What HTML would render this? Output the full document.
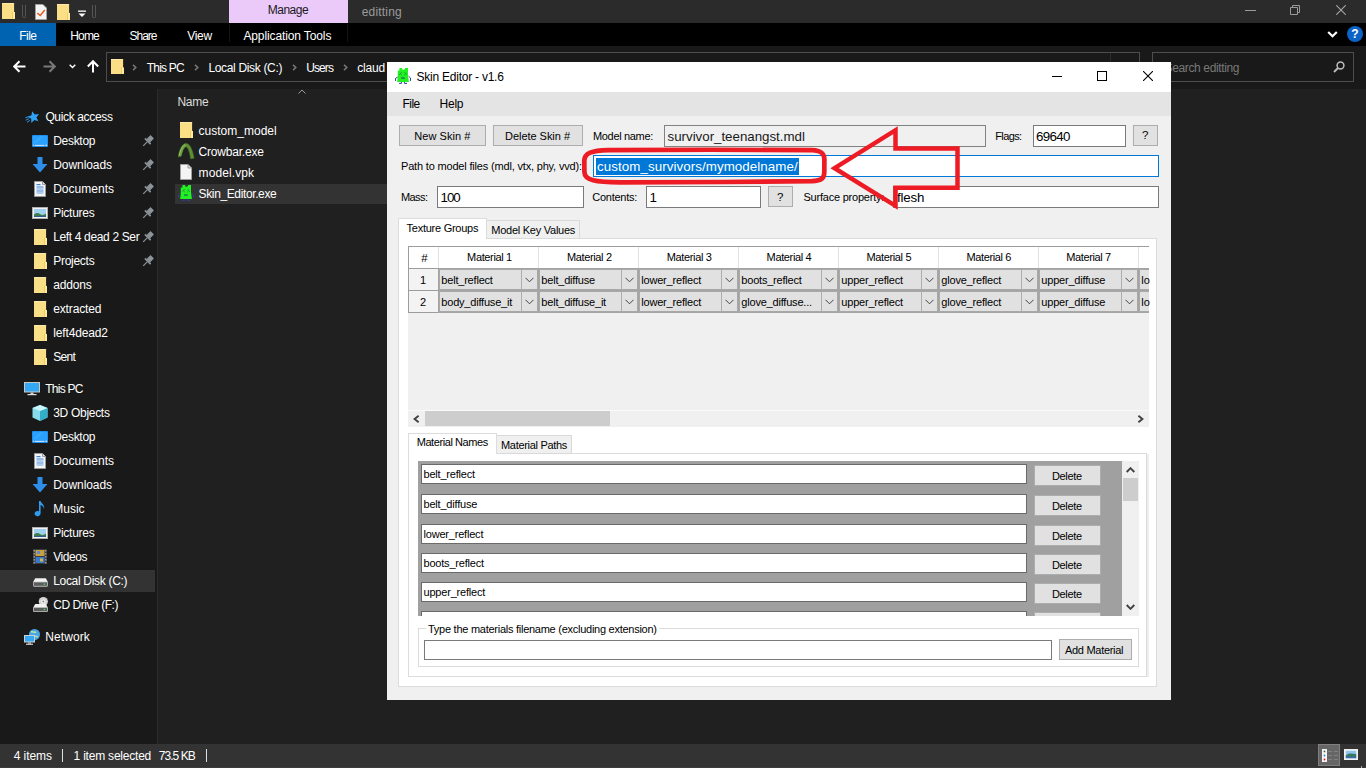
<!DOCTYPE html>
<html><head><meta charset="utf-8">
<style>
*{box-sizing:border-box;margin:0;padding:0}
html,body{width:1366px;height:768px;overflow:hidden;background:#202020}
body{position:relative;font-family:"Liberation Sans",sans-serif;font-size:12px;color:#fff}
.a{position:absolute}
.t{position:absolute;white-space:nowrap;line-height:16px;height:16px}
.tb{position:absolute;background:#fff;border:1px solid #7a7a7a}
.btn{position:absolute;background:#e1e1e1;border:1px solid #adadad}
.cb{position:absolute;background:#e1e1e1;border:1px solid #a8a8a8;height:21px;width:99px}
.cb i{position:absolute;right:15px;top:0;width:1px;height:19px;background:#adadad}
.cb svg{position:absolute;right:3px;top:7px}
</style></head><body>
<!-- ===== EXPLORER ===== -->
<div class="a" style="left:0;top:0;width:1366px;height:23px;background:#2b2b2b"></div>
<div class="a" style="left:229px;top:0;width:119px;height:23px;background:#ebc9f9"></div>
<div class="a" style="left:0;top:23px;width:1366px;height:23px;background:#000"></div>
<div class="a" style="left:0;top:23px;width:56px;height:23px;background:#0063b1"></div>
<div class="a" style="left:229px;top:24px;width:1px;height:18px;background:#151515"></div>
<div class="a" style="left:347px;top:24px;width:1px;height:18px;background:#151515"></div>
<div class="a" style="left:0;top:46px;width:1366px;height:43px;background:#191919"></div>
<div class="a" style="left:106px;top:52px;width:1034px;height:30px;border:1px solid #4d4d4d"></div>
<div class="a" style="left:1110px;top:53px;width:1px;height:28px;background:#2c2c2c"></div>
<div class="a" style="left:1152px;top:52px;width:202px;height:30px;border:1px solid #4d4d4d"></div>
<div class="a" style="left:0;top:89px;width:157px;height:655px;background:#191919"></div>
<div class="a" style="left:157px;top:89px;width:1px;height:655px;background:#2b2b2b"></div>
<div class="a" style="left:0;top:570px;width:155px;height:22px;background:#333"></div>
<div class="a" style="left:175px;top:184px;width:212px;height:20px;background:#333"></div>
<div class="a" style="left:0;top:744px;width:1366px;height:24px;background:#333"></div>
<div class="a" style="left:62px;top:749px;width:1px;height:13px;background:#e0e0e0"></div>
<div class="a" style="left:206px;top:749px;width:1px;height:13px;background:#e0e0e0"></div>
<div class="a" style="left:1318px;top:744px;width:22px;height:22px;background:#666;border:1px solid #808080"></div>
<div class="a" style="left:0;top:767px;width:1366px;height:1px;background:#3c3c3c"></div>
<svg class="a" style="left:2px;top:3px" width="13" height="16" viewBox="0 0 13 16"><path d="M0 0h11.6 l0.5 0.6V16H0z" fill="#fbdf86"/><rect x="0" y="0" width="11.6" height="1" fill="#fdeaa8"/><rect x="10.4" y="8.96" width="2.6" height="7.04" fill="#fde9a0"/><rect x="10.1" y="8.96" width="0.7" height="7.04" fill="#e6bd55"/></svg>
<div class="a" style="left:22px;top:5px;width:4px;height:13px;border:1px solid #555;border-top:none;border-radius:0 0 2px 2px"></div>
<svg class="a" style="left:35px;top:4px" width="12" height="16" viewBox="0 0 12 16"><path d="M0.5 0.5h7.5l3.5 3.5v11.5h-11z" fill="#f4f4f4" stroke="#a0a0a0"/><path d="M2.3 9.2l2.9 2.3 4.6-5.6" stroke="#f05a1e" stroke-width="1.5" fill="none"/></svg>
<svg class="a" style="left:57px;top:4px" width="13" height="16" viewBox="0 0 13 16"><path d="M0 0h11.6 l0.5 0.6V16H0z" fill="#fbdf86"/><rect x="0" y="0" width="11.6" height="1" fill="#fdeaa8"/><rect x="10.4" y="8.96" width="2.6" height="7.04" fill="#fde9a0"/><rect x="10.1" y="8.96" width="0.7" height="7.04" fill="#e6bd55"/></svg>
<svg class="a" style="left:77.7px;top:9.5px" width="8" height="8" viewBox="0 0 8 8"><rect x="0" y="0.5" width="8" height="1.3" fill="#fff"/><path d="M0.5 3.5h7L4 7z" fill="#fff"/></svg>
<div class="a" style="left:92px;top:5px;width:4px;height:13px;border:1px solid #555;border-top:none;border-radius:0 0 2px 2px"></div>
<svg class="a" style="left:1245px;top:10px" width="11" height="1" viewBox="0 0 11 1"><rect width="11" height="1" fill="#9a9a9a"/></svg>
<svg class="a" style="left:1290px;top:5px" width="10" height="10" viewBox="0 0 10 10"><path d="M0.5 2.5h7v7h-7zM2.5 2.5v-2h7v7h-2" fill="none" stroke="#9a9a9a"/></svg>
<svg class="a" style="left:1336px;top:5px" width="10" height="10" viewBox="0 0 10 10"><path d="M0.3 0.3l9.4 9.4M9.7 0.3l-9.4 9.4" stroke="#a8a8a8" stroke-width="1.1"/></svg>
<svg class="a" style="left:1327px;top:31px" width="11" height="7" viewBox="0 0 11 7"><path d="M1.2 1l4.3 4.2L9.8 1" stroke="#fff" stroke-width="2.2" fill="none"/></svg>
<div class="a" style="left:1347px;top:26px;width:16px;height:16px;border-radius:8px;background:#0d62c6;color:#fff;font-weight:bold;font-size:12px;line-height:16px;text-align:center">?</div>
<svg class="a" style="left:13px;top:60px" width="13" height="13" viewBox="0 0 13 13"><path d="M12.5 6.5H1.5M6.5 1.2L1.2 6.5l5.3 5.3" stroke="#fff" stroke-width="2" fill="none"/></svg>
<svg class="a" style="left:43px;top:60px" width="13" height="13" viewBox="0 0 13 13"><path d="M0.5 6.5H11.5M6.5 1.2l5.3 5.3-5.3 5.3" stroke="#7a7a7a" stroke-width="2" fill="none"/></svg>
<svg class="a" style="left:69px;top:64px" width="7" height="5" viewBox="0 0 7 5"><path d="M0.7 0.7l2.8 2.8 2.8-2.8" stroke="#fff" stroke-width="1.4" fill="none"/></svg>
<svg class="a" style="left:87px;top:60px" width="12" height="13" viewBox="0 0 12 13"><path d="M6 12.5V1.5M0.8 6.5L6 1.2l5.2 5.3" stroke="#fff" stroke-width="2" fill="none"/></svg>
<svg class="a" style="left:111px;top:59px" width="13" height="15" viewBox="0 0 13 15"><path d="M0 0h11.6 l0.5 0.6V15H0z" fill="#fbdf86"/><rect x="0" y="0" width="11.6" height="1" fill="#fdeaa8"/><rect x="10.4" y="8.4" width="2.6" height="6.6" fill="#fde9a0"/><rect x="10.1" y="8.4" width="0.7" height="6.6" fill="#e6bd55"/></svg>
<svg class="a" style="left:131.9px;top:64px" width="5" height="7" viewBox="0 0 5 7"><path d="M1 0.8L3.8 3.5 1 6.2" stroke="#757575" stroke-width="1.6" fill="none"/></svg>
<svg class="a" style="left:194.3px;top:64px" width="5" height="7" viewBox="0 0 5 7"><path d="M1 0.8L3.8 3.5 1 6.2" stroke="#757575" stroke-width="1.6" fill="none"/></svg>
<svg class="a" style="left:292.0px;top:64px" width="5" height="7" viewBox="0 0 5 7"><path d="M1 0.8L3.8 3.5 1 6.2" stroke="#757575" stroke-width="1.6" fill="none"/></svg>
<svg class="a" style="left:343.0px;top:64px" width="5" height="7" viewBox="0 0 5 7"><path d="M1 0.8L3.8 3.5 1 6.2" stroke="#757575" stroke-width="1.6" fill="none"/></svg>
<svg class="a" style="left:1333px;top:61px" width="12" height="12" viewBox="0 0 12 12"><circle cx="7.5" cy="4.5" r="3.4" stroke="#bdbdbd" stroke-width="1.5" fill="none"/><path d="M5 7L1 11" stroke="#bdbdbd" stroke-width="1.8"/></svg>
<svg class="a" style="left:297.5px;top:88.5px" width="8" height="5" viewBox="0 0 8 5"><path d="M0.5 4.5L4 1l3.5 3.5" stroke="#9a9a9a" stroke-width="1" fill="none"/></svg>
<svg class="a" style="left:25px;top:111px" width="15" height="12.2" viewBox="0 0 16 13"><g transform="rotate(-14 9 6.5)"><path d="M9.2 0l1.8 4.2 4.5 0.4-3.4 3 1 4.4-3.9-2.3-3.9 2.3 1-4.4-3.4-3 4.5-0.4z" fill="#2ea2f4"/></g><path d="M0.3 7.3l3.4-1.2M0.8 9.8l3.6-1.7M2.2 12l3-2" stroke="#2ea2f4" stroke-width="1" fill="none"/></svg>
<svg class="a" style="left:32px;top:134.5px" width="16" height="12" viewBox="0 0 16 12"><rect x="0" y="0" width="16" height="12" rx="1" fill="#1e90f0"/><rect x="1" y="1" width="14" height="8" fill="#2aa0ff"/><path d="M1 8L9 1h3L4 8z" fill="#4ab4ff" opacity="0.5"/><rect x="1.3" y="9.6" width="1" height="1.2" fill="#fff"/><rect x="3" y="9.8" width="9" height="1" fill="#e8f4ff"/><rect x="12.6" y="9.6" width="0.9" height="1.2" fill="#fff"/><rect x="14" y="9.6" width="0.9" height="1.2" fill="#fff"/></svg>
<svg class="a" style="left:141.6px;top:135.3px" width="12" height="12" viewBox="0 0 12 12"><g transform="rotate(45 6 6)"><rect x="3.6" y="0" width="4.8" height="5.6" fill="#8d939a"/><rect x="2" y="5.4" width="8" height="1.8" fill="#8d939a"/><rect x="5.4" y="7.2" width="1.2" height="5.6" fill="#8d939a"/></g></svg>
<svg class="a" style="left:32px;top:156.5px" width="16" height="16" viewBox="0 0 16 16"><path d="M5.5 0h5v7h5l-7.5 8.5L0.5 7h5z" fill="#2f8fe8"/></svg>
<svg class="a" style="left:141.6px;top:159.3px" width="12" height="12" viewBox="0 0 12 12"><g transform="rotate(45 6 6)"><rect x="3.6" y="0" width="4.8" height="5.6" fill="#8d939a"/><rect x="2" y="5.4" width="8" height="1.8" fill="#8d939a"/><rect x="5.4" y="7.2" width="1.2" height="5.6" fill="#8d939a"/></g></svg>
<svg class="a" style="left:34px;top:180.5px" width="12" height="16" viewBox="0 0 12 16"><path d="M0.5 0.5h8l3 3v12h-11z" fill="#f4f4f4" stroke="#9a9a9a" stroke-width="1"/><path d="M8.5 0.5v3h3" fill="#dcdcdc" stroke="#9a9a9a" stroke-width="1"/><rect x="2.5" y="3" width="4" height="1.2" fill="#3a86d8"/><rect x="2.5" y="5.5" width="7" height="1" fill="#3a86d8"/><rect x="2.5" y="7.5" width="7" height="1" fill="#6aa6e8"/><rect x="2.5" y="9.5" width="7" height="1" fill="#3a86d8"/><rect x="2.5" y="11.5" width="7" height="1" fill="#6aa6e8"/></svg>
<svg class="a" style="left:141.6px;top:183.3px" width="12" height="12" viewBox="0 0 12 12"><g transform="rotate(45 6 6)"><rect x="3.6" y="0" width="4.8" height="5.6" fill="#8d939a"/><rect x="2" y="5.4" width="8" height="1.8" fill="#8d939a"/><rect x="5.4" y="7.2" width="1.2" height="5.6" fill="#8d939a"/></g></svg>
<svg class="a" style="left:32px;top:206.5px" width="16" height="12" viewBox="0 0 16 12"><rect x="0.5" y="0.5" width="15" height="11" fill="#f2f2f2" stroke="#b0b0b0"/><rect x="2" y="2" width="12" height="8" fill="#9fd0f0"/><path d="M2 7.5c2-2 4-2 6-0.5s4 1 6-0.5V10H2z" fill="#3f7f4a"/><rect x="2" y="8.8" width="12" height="1.2" fill="#2f5f8a"/></svg>
<svg class="a" style="left:141.6px;top:207.3px" width="12" height="12" viewBox="0 0 12 12"><g transform="rotate(45 6 6)"><rect x="3.6" y="0" width="4.8" height="5.6" fill="#8d939a"/><rect x="2" y="5.4" width="8" height="1.8" fill="#8d939a"/><rect x="5.4" y="7.2" width="1.2" height="5.6" fill="#8d939a"/></g></svg>
<svg class="a" style="left:34px;top:228.5px" width="13" height="16" viewBox="0 0 13 16"><path d="M0 0h11.6 l0.5 0.6V16H0z" fill="#fbdf86"/><rect x="0" y="0" width="11.6" height="1" fill="#fdeaa8"/><rect x="10.4" y="8.96" width="2.6" height="7.04" fill="#fde9a0"/><rect x="10.1" y="8.96" width="0.7" height="7.04" fill="#e6bd55"/></svg>
<svg class="a" style="left:141.6px;top:231.3px" width="12" height="12" viewBox="0 0 12 12"><g transform="rotate(45 6 6)"><rect x="3.6" y="0" width="4.8" height="5.6" fill="#8d939a"/><rect x="2" y="5.4" width="8" height="1.8" fill="#8d939a"/><rect x="5.4" y="7.2" width="1.2" height="5.6" fill="#8d939a"/></g></svg>
<svg class="a" style="left:34px;top:252.5px" width="13" height="16" viewBox="0 0 13 16"><path d="M0 0h11.6 l0.5 0.6V16H0z" fill="#fbdf86"/><rect x="0" y="0" width="11.6" height="1" fill="#fdeaa8"/><rect x="10.4" y="8.96" width="2.6" height="7.04" fill="#fde9a0"/><rect x="10.1" y="8.96" width="0.7" height="7.04" fill="#e6bd55"/></svg>
<svg class="a" style="left:141.6px;top:255.3px" width="12" height="12" viewBox="0 0 12 12"><g transform="rotate(45 6 6)"><rect x="3.6" y="0" width="4.8" height="5.6" fill="#8d939a"/><rect x="2" y="5.4" width="8" height="1.8" fill="#8d939a"/><rect x="5.4" y="7.2" width="1.2" height="5.6" fill="#8d939a"/></g></svg>
<svg class="a" style="left:34px;top:276.5px" width="13" height="16" viewBox="0 0 13 16"><path d="M0 0h11.6 l0.5 0.6V16H0z" fill="#fbdf86"/><rect x="0" y="0" width="11.6" height="1" fill="#fdeaa8"/><rect x="10.4" y="8.96" width="2.6" height="7.04" fill="#fde9a0"/><rect x="10.1" y="8.96" width="0.7" height="7.04" fill="#e6bd55"/></svg>
<svg class="a" style="left:34px;top:300.5px" width="13" height="16" viewBox="0 0 13 16"><path d="M0 0h11.6 l0.5 0.6V16H0z" fill="#fbdf86"/><rect x="0" y="0" width="11.6" height="1" fill="#fdeaa8"/><rect x="10.4" y="8.96" width="2.6" height="7.04" fill="#fde9a0"/><rect x="10.1" y="8.96" width="0.7" height="7.04" fill="#e6bd55"/></svg>
<svg class="a" style="left:34px;top:324.5px" width="13" height="16" viewBox="0 0 13 16"><path d="M0 0h11.6 l0.5 0.6V16H0z" fill="#fbdf86"/><rect x="0" y="0" width="11.6" height="1" fill="#fdeaa8"/><rect x="10.4" y="8.96" width="2.6" height="7.04" fill="#fde9a0"/><rect x="10.1" y="8.96" width="0.7" height="7.04" fill="#e6bd55"/></svg>
<svg class="a" style="left:34px;top:348.5px" width="13" height="16" viewBox="0 0 13 16"><path d="M0 0h11.6 l0.5 0.6V16H0z" fill="#fbdf86"/><rect x="0" y="0" width="11.6" height="1" fill="#fdeaa8"/><rect x="10.4" y="8.96" width="2.6" height="7.04" fill="#fde9a0"/><rect x="10.1" y="8.96" width="0.7" height="7.04" fill="#e6bd55"/></svg>
<svg class="a" style="left:24px;top:381.5px" width="16" height="14" viewBox="0 0 16 14"><rect x="0.5" y="0.5" width="15" height="9.5" fill="#35a8f5" stroke="#c8c8c8"/><rect x="6.5" y="10.5" width="3" height="1.5" fill="#c8c8c8"/><rect x="3.5" y="12" width="9" height="1.2" fill="#e0e0e0"/></svg>
<svg class="a" style="left:32px;top:404.5px" width="16" height="16" viewBox="0 0 16 16"><path d="M8 0l7.5 3v9.5L8 16 0.5 12.5V3z" fill="#84dcec"/><path d="M8 6l7.5-3v9.5L8 16z" fill="#34aec8"/><path d="M8 6L0.5 3 8 0l7.5 3z" fill="#c8f6fa"/></svg>
<svg class="a" style="left:32px;top:430.5px" width="16" height="12" viewBox="0 0 16 12"><rect x="0" y="0" width="16" height="12" rx="1" fill="#1e90f0"/><rect x="1" y="1" width="14" height="8" fill="#2aa0ff"/><path d="M1 8L9 1h3L4 8z" fill="#4ab4ff" opacity="0.5"/><rect x="1.3" y="9.6" width="1" height="1.2" fill="#fff"/><rect x="3" y="9.8" width="9" height="1" fill="#e8f4ff"/><rect x="12.6" y="9.6" width="0.9" height="1.2" fill="#fff"/><rect x="14" y="9.6" width="0.9" height="1.2" fill="#fff"/></svg>
<svg class="a" style="left:34px;top:452.5px" width="12" height="16" viewBox="0 0 12 16"><path d="M0.5 0.5h8l3 3v12h-11z" fill="#f4f4f4" stroke="#9a9a9a" stroke-width="1"/><path d="M8.5 0.5v3h3" fill="#dcdcdc" stroke="#9a9a9a" stroke-width="1"/><rect x="2.5" y="3" width="4" height="1.2" fill="#3a86d8"/><rect x="2.5" y="5.5" width="7" height="1" fill="#3a86d8"/><rect x="2.5" y="7.5" width="7" height="1" fill="#6aa6e8"/><rect x="2.5" y="9.5" width="7" height="1" fill="#3a86d8"/><rect x="2.5" y="11.5" width="7" height="1" fill="#6aa6e8"/></svg>
<svg class="a" style="left:32px;top:476.5px" width="16" height="16" viewBox="0 0 16 16"><path d="M5.5 0h5v7h5l-7.5 8.5L0.5 7h5z" fill="#2f8fe8"/></svg>
<svg class="a" style="left:34px;top:500.5px" width="11" height="16" viewBox="0 0 11 16"><path d="M5 0h1.6c0.5 2.5 4.4 3.4 3.4 8-0.3-2.4-1.8-3.6-3.4-4v8.6a3 2.6 0 1 1-1.6-2.3z" fill="#2f9cf0"/></svg>
<svg class="a" style="left:32px;top:526.5px" width="16" height="12" viewBox="0 0 16 12"><rect x="0.5" y="0.5" width="15" height="11" fill="#f2f2f2" stroke="#b0b0b0"/><rect x="2" y="2" width="12" height="8" fill="#9fd0f0"/><path d="M2 7.5c2-2 4-2 6-0.5s4 1 6-0.5V10H2z" fill="#3f7f4a"/><rect x="2" y="8.8" width="12" height="1.2" fill="#2f5f8a"/></svg>
<svg class="a" style="left:33px;top:549.0px" width="14" height="15" viewBox="0 0 14 15"><rect x="0" y="0" width="14" height="15" fill="#3c3c3c"/><rect x="2.5" y="1" width="9" height="6" fill="#c8a040"/><rect x="2.5" y="8" width="9" height="6" fill="#3a78c8"/><rect x="4" y="2" width="3" height="3" fill="#5a8ad8"/><rect x="7" y="9.5" width="3" height="3" fill="#d8b050"/><rect x="0.6" y="1" width="1.2" height="1.6" fill="#a8a8a8"/><rect x="12.2" y="1" width="1.2" height="1.6" fill="#a8a8a8"/><rect x="0.6" y="4" width="1.2" height="1.6" fill="#a8a8a8"/><rect x="12.2" y="4" width="1.2" height="1.6" fill="#a8a8a8"/><rect x="0.6" y="7" width="1.2" height="1.6" fill="#a8a8a8"/><rect x="12.2" y="7" width="1.2" height="1.6" fill="#a8a8a8"/><rect x="0.6" y="10" width="1.2" height="1.6" fill="#a8a8a8"/><rect x="12.2" y="10" width="1.2" height="1.6" fill="#a8a8a8"/><rect x="0.6" y="13" width="1.2" height="1.6" fill="#a8a8a8"/><rect x="12.2" y="13" width="1.2" height="1.6" fill="#a8a8a8"/></svg>
<svg class="a" style="left:32.5px;top:577.5px" width="15" height="9" viewBox="0 0 15 9"><path d="M2.2 0.3h10.6l2 3.6H0.2z" fill="#f2f2f2"/><rect x="0.4" y="3.9" width="14.2" height="4.4" rx="0.6" fill="#5c5c5c" stroke="#d4d4d4" stroke-width="0.8"/><rect x="10.6" y="5.5" width="1.6" height="1.3" fill="#35e060"/></svg>
<svg class="a" style="left:32.5px;top:596.5px" width="15" height="15" viewBox="0 0 15 15"><circle cx="10.3" cy="4.6" r="4.6" fill="#d4d4d4"/><circle cx="10.3" cy="4.6" r="2.2" fill="#f4f4f4"/><circle cx="10.3" cy="4.6" r="1" fill="#8a8a8a"/><path d="M2.2 7h10.6l2 3.4H0.2z" fill="#f2f2f2"/><rect x="0.4" y="10.4" width="14.2" height="4.2" rx="0.6" fill="#5c5c5c" stroke="#d4d4d4" stroke-width="0.8"/><rect x="10.6" y="11.9" width="1.6" height="1.3" fill="#35e060"/></svg>
<svg class="a" style="left:24px;top:628.5px" width="16" height="16" viewBox="0 0 16 16"><circle cx="10.5" cy="5.5" r="5.5" fill="#4aa8e8"/><path d="M7 3c2-1 3 1 5 0M6 7c2 1 5-1 8 1" stroke="#b8e8a0" stroke-width="1.4" fill="none"/><rect x="0.5" y="6.5" width="10" height="6.5" fill="#35a8f5" stroke="#d0d0d0"/><rect x="4" y="13.5" width="3" height="1.2" fill="#c8c8c8"/><rect x="2" y="14.7" width="7" height="1.1" fill="#e0e0e0"/></svg>
<svg class="a" style="left:180px;top:122px" width="13" height="16" viewBox="0 0 13 16"><path d="M0 0h11.6 l0.5 0.6V16H0z" fill="#fbdf86"/><rect x="0" y="0" width="11.6" height="1" fill="#fdeaa8"/><rect x="10.4" y="8.96" width="2.6" height="7.04" fill="#fde9a0"/><rect x="10.1" y="8.96" width="0.7" height="7.04" fill="#e6bd55"/></svg>
<svg class="a" style="left:177.8px;top:143px" width="17" height="16.5" viewBox="0 0 17 16.5"><path d="M0 14.2C1.5 5.5 4.5 0.3 8 0.3S14.5 5.5 16.2 15.2l-3.6 0.8C11.6 9 10 4 8 4S4.4 8.5 3.4 13.2z" fill="#5f8f34" stroke="#3c6420" stroke-width="0.5"/><path d="M1.2 12.5C2.5 6.5 4.8 2.2 7.2 1.8" stroke="#a8d07a" stroke-width="0.9" fill="none"/><path d="M2.6 13C3.8 7.5 5.6 3.8 7.6 3" stroke="#86b858" stroke-width="0.7" fill="none"/></svg>
<svg class="a" style="left:180px;top:164px" width="12" height="16" viewBox="0 0 12 16"><path d="M0.5 0.5h7.5l3.5 3.5v11.5h-11z" fill="#f4f4f4" stroke="#a0a0a0"/><path d="M8 0.5v3.5h3.5" fill="#d8d8d8" stroke="#a0a0a0"/></svg>
<svg class="a" style="left:178px;top:184.3px" width="16.0" height="17.0" viewBox="0 0 16 17"><path d="M4.4 0.9H6.9L7.8 3 10 2V0.9H13V8L13.9 15H2.2L2.8 8V3.4H4.4Z" fill="#22f022"/><path d="M2.6 10.1L0.5 11.4V13.9M13.6 9.2L15.5 11V13.9M6.4 15V16.4H4.1M9.4 15V16.4H12" stroke="#2f3c9c" stroke-width="1" fill="none"/><path d="M6.6 5.4L4.4 7.5M9.5 5.4L11.9 7.5" stroke="#178040" stroke-width="0.9" fill="none"/><rect x="5.9" y="7.4" width="0.8" height="0.9" fill="#178040"/><rect x="9.4" y="7.4" width="0.8" height="0.9" fill="#178040"/><rect x="6.1" y="10.3" width="3.7" height="1.5" fill="#1d7a4a"/></svg>
<svg class="a" style="left:1322px;top:749px" width="17" height="13" viewBox="0 0 17 13"><rect x="0" y="0" width="5" height="13" fill="#f4f4f4"/><circle cx="2.5" cy="2.4" r="0.9" fill="#3a6a4a"/><circle cx="2.5" cy="6.5" r="0.9" fill="#3a7ae0"/><circle cx="2.5" cy="10.5" r="0.9" fill="#d01a1a"/><rect x="6" y="2" width="4" height="0.9" fill="#858585"/><rect x="12" y="2" width="4" height="0.9" fill="#858585"/><rect x="6" y="6.1" width="4" height="0.9" fill="#858585"/><rect x="12" y="6.1" width="4" height="0.9" fill="#858585"/><rect x="6" y="10.1" width="4" height="0.9" fill="#858585"/><rect x="12" y="10.1" width="4" height="0.9" fill="#858585"/></svg>
<svg class="a" style="left:1344px;top:749px" width="14" height="11" viewBox="0 0 14 11"><rect x="0" y="0" width="14" height="11" fill="#f0f0f0"/><rect x="1.8" y="1.8" width="10.4" height="7.4" fill="#8cc4f0"/><path d="M1.8 6.5c2-2.5 5-2.5 10.4-1.5v3h-10.4z" fill="#3a7a5a"/><rect x="1.8" y="7.4" width="10.4" height="1.8" fill="#3a6aa8"/></svg>
<div class="a" style="left:1361px;top:766px;width:1px;height:2px;background:#aaa"></div>
<div class="t" style="left:267.7px;top:2.0px;color:#1a1a1a;font-size:12px;letter-spacing:-0.475px;">Manage</div>
<div class="t" style="left:361.7px;top:3.5px;color:#9b9b9b;font-size:12px;letter-spacing:0.185px;">editting</div>
<div class="t" style="left:19.3px;top:27.5px;color:#fff;font-size:12px;letter-spacing:-0.581px;">File</div>
<div class="t" style="left:70.3px;top:27.5px;color:#fff;font-size:12px;letter-spacing:-0.839px;">Home</div>
<div class="t" style="left:129.5px;top:27.5px;color:#fff;font-size:12px;letter-spacing:-1.008px;">Share</div>
<div class="t" style="left:187.2px;top:27.5px;color:#fff;font-size:12px;letter-spacing:-0.266px;">View</div>
<div class="t" style="left:243.4px;top:27.5px;color:#fff;font-size:12px;letter-spacing:-0.115px;">Application Tools</div>
<div class="t" style="left:146.7px;top:59.5px;color:#fff;font-size:12px;letter-spacing:-0.781px;">This PC</div>
<div class="t" style="left:208.4px;top:59.5px;color:#fff;font-size:12px;letter-spacing:-0.335px;">Local Disk (C:)</div>
<div class="t" style="left:306.3px;top:59.5px;color:#fff;font-size:12px;letter-spacing:-0.936px;">Users</div>
<div class="t" style="left:357.3px;top:59.5px;color:#fff;font-size:12px;letter-spacing:-0.222px;">claud</div>
<div class="t" style="left:1164.5px;top:59.5px;color:#787878;font-size:12px;letter-spacing:-0.362px;">Search editting</div>
<div class="t" style="left:177.4px;top:93.5px;color:#dedede;font-size:12px;letter-spacing:-0.205px;">Name</div>
<div class="t" style="left:198.6px;top:122.5px;color:#fff;font-size:12px;letter-spacing:0.005px;">custom_model</div>
<div class="t" style="left:198.6px;top:143.5px;color:#fff;font-size:12px;letter-spacing:-0.208px;">Crowbar.exe</div>
<div class="t" style="left:198.6px;top:164.5px;color:#fff;font-size:12px;letter-spacing:0.087px;">model.vpk</div>
<div class="t" style="left:198.6px;top:185.5px;color:#fff;font-size:12px;letter-spacing:-0.378px;">Skin_Editor.exe</div>
<div class="t" style="left:45.4px;top:108.5px;color:#fff;font-size:12px;letter-spacing:-0.351px;">Quick access</div>
<div class="t" style="left:53.2px;top:132.5px;color:#fff;font-size:12px;letter-spacing:-0.289px;">Desktop</div>
<div class="t" style="left:53.2px;top:156.5px;color:#fff;font-size:12px;letter-spacing:-0.059px;">Downloads</div>
<div class="t" style="left:53.2px;top:180.5px;color:#fff;font-size:12px;letter-spacing:0.012px;">Documents</div>
<div class="t" style="left:53.2px;top:204.5px;color:#fff;font-size:12px;letter-spacing:-0.266px;">Pictures</div>
<div class="t" style="left:53.2px;top:228.5px;color:#fff;font-size:12px;letter-spacing:-0.349px;">Left 4 dead 2 Ser</div>
<div class="t" style="left:53.2px;top:252.5px;color:#fff;font-size:12px;letter-spacing:-0.266px;">Projects</div>
<div class="t" style="left:53.2px;top:276.5px;color:#fff;font-size:12px;letter-spacing:-0.175px;">addons</div>
<div class="t" style="left:53.2px;top:300.5px;color:#fff;font-size:12px;letter-spacing:-0.132px;">extracted</div>
<div class="t" style="left:53.2px;top:324.5px;color:#fff;font-size:12px;letter-spacing:-0.14px;">left4dead2</div>
<div class="t" style="left:53.2px;top:348.5px;color:#fff;font-size:12px;letter-spacing:-0.663px;">Sent</div>
<div class="t" style="left:45.3px;top:380.5px;color:#fff;font-size:12px;letter-spacing:-0.765px;">This PC</div>
<div class="t" style="left:53.2px;top:404.5px;color:#fff;font-size:12px;letter-spacing:-0.295px;">3D Objects</div>
<div class="t" style="left:53.2px;top:428.5px;color:#fff;font-size:12px;letter-spacing:-0.289px;">Desktop</div>
<div class="t" style="left:53.2px;top:452.5px;color:#fff;font-size:12px;letter-spacing:0.012px;">Documents</div>
<div class="t" style="left:53.2px;top:476.5px;color:#fff;font-size:12px;letter-spacing:-0.059px;">Downloads</div>
<div class="t" style="left:53.2px;top:500.5px;color:#fff;font-size:12px;letter-spacing:0.014px;">Music</div>
<div class="t" style="left:53.2px;top:524.5px;color:#fff;font-size:12px;letter-spacing:-0.266px;">Pictures</div>
<div class="t" style="left:53.2px;top:548.5px;color:#fff;font-size:12px;letter-spacing:-0.417px;">Videos</div>
<div class="t" style="left:53.2px;top:572.5px;color:#fff;font-size:12px;letter-spacing:-0.306px;">Local Disk (C:)</div>
<div class="t" style="left:53.2px;top:596.5px;color:#fff;font-size:12px;letter-spacing:-0.448px;">CD Drive (F:)</div>
<div class="t" style="left:45.3px;top:628.5px;color:#fff;font-size:12px;letter-spacing:0.081px;">Network</div>
<div class="t" style="left:13.7px;top:747.5px;color:#fff;font-size:12px;letter-spacing:-0.065px;">4 items</div>
<div class="t" style="left:73.6px;top:747.5px;color:#fff;font-size:12px;letter-spacing:-0.216px;">1 item selected</div>
<div class="t" style="left:158.7px;top:747.5px;color:#fff;font-size:12px;letter-spacing:-0.934px;">73.5 KB</div>
<!-- ===== SKIN EDITOR ===== -->
<div class="a" style="left:387px;top:62px;width:784px;height:638px;background:#f0f0f0"></div>
<div class="a" style="left:387px;top:62px;width:784px;height:30px;background:#fff"></div>
<div class="a" style="left:387px;top:92px;width:784px;height:24px;background:#e4e4e4"></div>
<svg class="a" style="left:395px;top:67px" width="16.0" height="17.0" viewBox="0 0 16 17"><path d="M4.4 0.9H6.9L7.8 3 10 2V0.9H13V8L13.9 15H2.2L2.8 8V3.4H4.4Z" fill="#22f022"/><path d="M2.6 10.1L0.5 11.4V13.9M13.6 9.2L15.5 11V13.9M6.4 15V16.4H4.1M9.4 15V16.4H12" stroke="#2f3c9c" stroke-width="1" fill="none"/><path d="M6.6 5.4L4.4 7.5M9.5 5.4L11.9 7.5" stroke="#178040" stroke-width="0.9" fill="none"/><rect x="5.9" y="7.4" width="0.8" height="0.9" fill="#178040"/><rect x="9.4" y="7.4" width="0.8" height="0.9" fill="#178040"/><rect x="6.1" y="10.3" width="3.7" height="1.5" fill="#1d7a4a"/></svg>
<svg class="a" style="left:1052px;top:76px" width="10" height="1" viewBox="0 0 10 1"><rect width="10" height="1" fill="#000"/></svg>
<svg class="a" style="left:1097px;top:71px" width="10" height="10" viewBox="0 0 10 10"><rect x="0.5" y="0.5" width="9" height="9" fill="none" stroke="#000"/></svg>
<svg class="a" style="left:1143px;top:71px" width="10" height="10" viewBox="0 0 10 10"><path d="M0 0l10 10M10 0L0 10" stroke="#000" stroke-width="1.1"/></svg>
<div class="btn" style="left:399px;top:125px;width:87px;height:21px"></div>
<div class="btn" style="left:493px;top:125px;width:90px;height:21px"></div>
<div class="tb" style="left:664px;top:125px;width:322px;height:22px;background:#f0f0f0;border-color:#828282"></div>
<div class="tb" style="left:1033px;top:125px;width:93px;height:22px"></div>
<div class="btn" style="left:1133px;top:125px;width:25px;height:21px"></div>
<div class="tb" style="left:593px;top:155px;width:566px;height:22px;border-color:#0078d7"></div>
<div class="a" style="left:596px;top:158px;width:203px;height:17px;background:#0078d7"></div>
<div class="tb" style="left:437px;top:186px;width:147px;height:22px"></div>
<div class="tb" style="left:646px;top:186px;width:115px;height:22px"></div>
<div class="btn" style="left:768px;top:186px;width:25px;height:21px"></div>
<div class="tb" style="left:893px;top:186px;width:266px;height:22px"></div>
<div class="a" style="left:398px;top:238px;width:759px;height:449px;background:#fff;border:1px solid #dcdcdc"></div>
<div class="a" style="left:486px;top:220px;width:94px;height:19px;background:#f0f0f0;border:1px solid #d9d9d9"></div>
<div class="a" style="left:398px;top:218px;width:89px;height:21px;background:#fff;border:1px solid #dcdcdc;border-bottom:none"></div>
<div class="a" style="left:408px;top:246px;width:741px;height:181px;background:#f0f0f0"></div>
<div class="a" style="left:408px;top:246px;width:741px;height:22px;background:#fff;border-top:1px solid #9c9c9c"></div>
<div class="a" style="left:408px;top:246px;width:31px;height:67px;background:#f3f3f3;border:1px solid #9c9c9c;border-right:none"></div>
<div class="a" style="left:409px;top:247px;width:29px;height:21px;background:#fff"></div>
<div class="a" style="left:438px;top:268px;width:711px;height:45px;background:#a4a4a4"></div>
<div class="a" style="left:408px;top:290px;width:31px;height:1px;background:#9c9c9c"></div>
<div class="a" style="left:408px;top:268px;width:31px;height:1px;background:#9c9c9c"></div>
<div class="a" style="left:438px;top:247px;width:1px;height:21px;background:#e2e2e2"></div>
<div class="a" style="left:538px;top:247px;width:1px;height:21px;background:#e2e2e2"></div>
<div class="a" style="left:638px;top:247px;width:1px;height:21px;background:#e2e2e2"></div>
<div class="a" style="left:738px;top:247px;width:1px;height:21px;background:#e2e2e2"></div>
<div class="a" style="left:838px;top:247px;width:1px;height:21px;background:#e2e2e2"></div>
<div class="a" style="left:938px;top:247px;width:1px;height:21px;background:#e2e2e2"></div>
<div class="a" style="left:1038px;top:247px;width:1px;height:21px;background:#e2e2e2"></div>
<div class="a" style="left:1138px;top:247px;width:1px;height:21px;background:#e2e2e2"></div>
<div class="cb" style="left:439px;top:269px"><i></i><svg width="9" height="6" viewBox="0 0 9 6"><path d="M0.5 0.8L4.5 4.8 8.5 0.8" stroke="#404040" stroke-width="1" fill="none"/></svg></div>
<div class="cb" style="left:539px;top:269px"><i></i><svg width="9" height="6" viewBox="0 0 9 6"><path d="M0.5 0.8L4.5 4.8 8.5 0.8" stroke="#404040" stroke-width="1" fill="none"/></svg></div>
<div class="cb" style="left:639px;top:269px"><i></i><svg width="9" height="6" viewBox="0 0 9 6"><path d="M0.5 0.8L4.5 4.8 8.5 0.8" stroke="#404040" stroke-width="1" fill="none"/></svg></div>
<div class="cb" style="left:739px;top:269px"><i></i><svg width="9" height="6" viewBox="0 0 9 6"><path d="M0.5 0.8L4.5 4.8 8.5 0.8" stroke="#404040" stroke-width="1" fill="none"/></svg></div>
<div class="cb" style="left:839px;top:269px"><i></i><svg width="9" height="6" viewBox="0 0 9 6"><path d="M0.5 0.8L4.5 4.8 8.5 0.8" stroke="#404040" stroke-width="1" fill="none"/></svg></div>
<div class="cb" style="left:939px;top:269px"><i></i><svg width="9" height="6" viewBox="0 0 9 6"><path d="M0.5 0.8L4.5 4.8 8.5 0.8" stroke="#404040" stroke-width="1" fill="none"/></svg></div>
<div class="cb" style="left:1039px;top:269px"><i></i><svg width="9" height="6" viewBox="0 0 9 6"><path d="M0.5 0.8L4.5 4.8 8.5 0.8" stroke="#404040" stroke-width="1" fill="none"/></svg></div>
<div class="cb" style="left:1139px;top:269px;width:10px;border-right:none"></div>
<div class="cb" style="left:439px;top:291px"><i></i><svg width="9" height="6" viewBox="0 0 9 6"><path d="M0.5 0.8L4.5 4.8 8.5 0.8" stroke="#404040" stroke-width="1" fill="none"/></svg></div>
<div class="cb" style="left:539px;top:291px"><i></i><svg width="9" height="6" viewBox="0 0 9 6"><path d="M0.5 0.8L4.5 4.8 8.5 0.8" stroke="#404040" stroke-width="1" fill="none"/></svg></div>
<div class="cb" style="left:639px;top:291px"><i></i><svg width="9" height="6" viewBox="0 0 9 6"><path d="M0.5 0.8L4.5 4.8 8.5 0.8" stroke="#404040" stroke-width="1" fill="none"/></svg></div>
<div class="cb" style="left:739px;top:291px"><i></i><svg width="9" height="6" viewBox="0 0 9 6"><path d="M0.5 0.8L4.5 4.8 8.5 0.8" stroke="#404040" stroke-width="1" fill="none"/></svg></div>
<div class="cb" style="left:839px;top:291px"><i></i><svg width="9" height="6" viewBox="0 0 9 6"><path d="M0.5 0.8L4.5 4.8 8.5 0.8" stroke="#404040" stroke-width="1" fill="none"/></svg></div>
<div class="cb" style="left:939px;top:291px"><i></i><svg width="9" height="6" viewBox="0 0 9 6"><path d="M0.5 0.8L4.5 4.8 8.5 0.8" stroke="#404040" stroke-width="1" fill="none"/></svg></div>
<div class="cb" style="left:1039px;top:291px"><i></i><svg width="9" height="6" viewBox="0 0 9 6"><path d="M0.5 0.8L4.5 4.8 8.5 0.8" stroke="#404040" stroke-width="1" fill="none"/></svg></div>
<div class="cb" style="left:1139px;top:291px;width:10px;border-right:none"></div>
<div class="a" style="left:408px;top:410px;width:741px;height:1px;background:#fafafa"></div>
<div class="a" style="left:425px;top:411px;width:185px;height:15px;background:#cdcdcd"></div>
<svg class="a" style="left:413px;top:414.5px" width="7" height="8" viewBox="0 0 7 8"><path d="M5.6 0.8L1.6 4l4 3.2" stroke="#404040" stroke-width="1.9" fill="none"/></svg>
<svg class="a" style="left:1137px;top:414.5px" width="7" height="8" viewBox="0 0 7 8"><path d="M1.4 0.8L5.4 4l-4 3.2" stroke="#404040" stroke-width="1.9" fill="none"/></svg>
<div class="a" style="left:408px;top:453px;width:739px;height:224px;background:#fff;border:1px solid #dcdcdc"></div>
<div class="a" style="left:496px;top:435px;width:76px;height:19px;background:#f0f0f0;border:1px solid #d9d9d9"></div>
<div class="a" style="left:408px;top:433px;width:89px;height:21px;background:#fff;border:1px solid #dcdcdc;border-bottom:none"></div>
<div class="a" style="left:1147px;top:454px;width:2px;height:223px;background:#eeeeee"></div>
<div class="a" style="left:418px;top:461px;width:704px;height:155px;background:#a0a0a0;overflow:hidden">
<div class="tb" style="left:3px;top:3.0px;width:606px;height:20px;border-color:#6a6a6a"></div>
<div class="btn" style="left:616px;top:4.0px;width:67px;height:20.6px"></div>
<div class="tb" style="left:3px;top:33.0px;width:606px;height:20px;border-color:#6a6a6a"></div>
<div class="btn" style="left:616px;top:34.0px;width:67px;height:20.6px"></div>
<div class="tb" style="left:3px;top:63.0px;width:606px;height:20px;border-color:#6a6a6a"></div>
<div class="btn" style="left:616px;top:64.0px;width:67px;height:20.6px"></div>
<div class="tb" style="left:3px;top:92.0px;width:606px;height:20px;border-color:#6a6a6a"></div>
<div class="btn" style="left:616px;top:93.0px;width:67px;height:20.6px"></div>
<div class="tb" style="left:3px;top:121.0px;width:606px;height:20px;border-color:#6a6a6a"></div>
<div class="btn" style="left:616px;top:122.0px;width:67px;height:20.6px"></div>
<div class="tb" style="left:3px;top:150.0px;width:606px;height:20px;border-color:#6a6a6a"></div>
<div class="btn" style="left:616px;top:151.0px;width:67px;height:20.6px"></div>
</div>
<div class="a" style="left:1122px;top:461px;width:17px;height:155px;background:#f0f0f0"></div>
<div class="a" style="left:1123px;top:478px;width:15px;height:23px;background:#cdcdcd"></div>
<svg class="a" style="left:1126px;top:467px" width="9" height="6" viewBox="0 0 9 6"><path d="M0.7 5L4.5 1.2 8.3 5" stroke="#404040" stroke-width="1.9" fill="none"/></svg>
<svg class="a" style="left:1126px;top:604px" width="9" height="6" viewBox="0 0 9 6"><path d="M0.7 1L4.5 4.8 8.3 1" stroke="#404040" stroke-width="1.9" fill="none"/></svg>
<div class="a" style="left:418px;top:628px;width:721px;height:39px;border:1px solid #dcdcdc"></div>
<div class="tb" style="left:424px;top:640px;width:628px;height:20px"></div>
<div class="btn" style="left:1059px;top:639px;width:73px;height:21px"></div>
<div class="t" style="left:416.6px;top:68.5px;color:#000;font-size:12px;letter-spacing:-0.24px;">Skin Editor - v1.6</div>
<div class="t" style="left:402.6px;top:95.5px;color:#000;font-size:12px;letter-spacing:-0.581px;">File</div>
<div class="t" style="left:439.5px;top:95.5px;color:#000;font-size:12px;letter-spacing:-0.229px;">Help</div>
<div class="t" style="left:414.3px;top:127.5px;color:#000;font-size:11px;letter-spacing:0.04px;">New Skin #</div>
<div class="t" style="left:505.0px;top:127.5px;color:#000;font-size:11px;letter-spacing:-0.036px;">Delete Skin #</div>
<div class="t" style="left:593.0px;top:127.5px;color:#000;font-size:11px;letter-spacing:-0.329px;">Model name:</div>
<div class="t" style="left:667.6px;top:129.0px;color:#1a1a1a;font-size:13.33px;letter-spacing:-0.024px;">survivor_teenangst.mdl</div>
<div class="t" style="left:995.2px;top:127.5px;color:#000;font-size:11px;letter-spacing:-0.594px;">Flags:</div>
<div class="t" style="left:1036.0px;top:128.5px;color:#000;font-size:13.33px;letter-spacing:-0.641px;">69640</div>
<div class="t" style="left:1142.0px;top:127.0px;color:#000;font-size:11.5px;">?</div>
<div class="t" style="left:401.0px;top:158.3px;color:#000;font-size:11px;letter-spacing:-0.177px;">Path to model files (mdl, vtx, phy, vvd):</div>
<div class="t" style="left:597.1px;top:159.0px;color:#fff;font-size:13.33px;letter-spacing:0.074px;">custom_survivors/mymodelname/</div>
<div class="t" style="left:401.0px;top:189.0px;color:#000;font-size:11px;letter-spacing:-0.586px;">Mass:</div>
<div class="t" style="left:440.6px;top:189.5px;color:#000;font-size:13.33px;letter-spacing:-1.125px;">100</div>
<div class="t" style="left:592.3px;top:189.0px;color:#000;font-size:11px;letter-spacing:-0.262px;">Contents:</div>
<div class="t" style="left:649.5px;top:189.5px;color:#000;font-size:13.33px;">1</div>
<div class="t" style="left:777.0px;top:189.0px;color:#000;font-size:11.5px;">?</div>
<div class="t" style="left:803.4px;top:189.0px;color:#000;font-size:11px;letter-spacing:-0.211px;">Surface property:</div>
<div class="t" style="left:897.0px;top:189.5px;color:#000;font-size:13.33px;letter-spacing:-0.189px;">flesh</div>
<div class="t" style="left:406.6px;top:220.0px;color:#000;font-size:11px;letter-spacing:-0.262px;">Texture Groups</div>
<div class="t" style="left:491.3px;top:221.8px;color:#000;font-size:11px;letter-spacing:-0.257px;">Model Key Values</div>
<div class="t" style="left:421.3px;top:249.5px;color:#000;font-size:11.5px;">#</div>
<div class="t" style="left:467.1px;top:249.0px;color:#000;font-size:11px;letter-spacing:-0.366px;">Material 1</div>
<div class="t" style="left:567.0px;top:249.0px;color:#000;font-size:11px;letter-spacing:-0.366px;">Material 2</div>
<div class="t" style="left:666.8px;top:249.0px;color:#000;font-size:11px;letter-spacing:-0.366px;">Material 3</div>
<div class="t" style="left:766.6px;top:249.0px;color:#000;font-size:11px;letter-spacing:-0.366px;">Material 4</div>
<div class="t" style="left:866.5px;top:249.0px;color:#000;font-size:11px;letter-spacing:-0.366px;">Material 5</div>
<div class="t" style="left:966.4px;top:249.0px;color:#000;font-size:11px;letter-spacing:-0.366px;">Material 6</div>
<div class="t" style="left:1066.2px;top:249.0px;color:#000;font-size:11px;letter-spacing:-0.366px;">Material 7</div>
<div class="t" style="left:420.0px;top:271.5px;color:#000;font-size:11px;">1</div>
<div class="t" style="left:420.0px;top:293.5px;color:#000;font-size:11px;">2</div>
<div class="t" style="left:441.3px;top:271.5px;color:#000;font-size:11px;letter-spacing:-0.2px">belt_reflect</div>
<div class="t" style="left:441.3px;top:293.5px;color:#000;font-size:11px;letter-spacing:-0.2px">body_diffuse_it</div>
<div class="t" style="left:541.3px;top:271.5px;color:#000;font-size:11px;letter-spacing:-0.2px">belt_diffuse</div>
<div class="t" style="left:541.3px;top:293.5px;color:#000;font-size:11px;letter-spacing:-0.2px">belt_diffuse_it</div>
<div class="t" style="left:641.3px;top:271.5px;color:#000;font-size:11px;letter-spacing:-0.2px">lower_reflect</div>
<div class="t" style="left:641.3px;top:293.5px;color:#000;font-size:11px;letter-spacing:-0.2px">lower_reflect</div>
<div class="t" style="left:741.3px;top:271.5px;color:#000;font-size:11px;letter-spacing:-0.2px">boots_reflect</div>
<div class="t" style="left:741.3px;top:293.5px;color:#000;font-size:11px;letter-spacing:-0.2px">glove_diffuse...</div>
<div class="t" style="left:841.3px;top:271.5px;color:#000;font-size:11px;letter-spacing:-0.2px">upper_reflect</div>
<div class="t" style="left:841.3px;top:293.5px;color:#000;font-size:11px;letter-spacing:-0.2px">upper_reflect</div>
<div class="t" style="left:941.3px;top:271.5px;color:#000;font-size:11px;letter-spacing:-0.2px">glove_reflect</div>
<div class="t" style="left:941.3px;top:293.5px;color:#000;font-size:11px;letter-spacing:-0.2px">glove_reflect</div>
<div class="t" style="left:1041.3px;top:271.5px;color:#000;font-size:11px;letter-spacing:-0.2px">upper_diffuse</div>
<div class="t" style="left:1041.3px;top:293.5px;color:#000;font-size:11px;letter-spacing:-0.2px">upper_diffuse</div>
<div class="t" style="left:1141.3px;top:271.5px;color:#000;font-size:11px;">lo</div>
<div class="t" style="left:1141.3px;top:293.5px;color:#000;font-size:11px;">lo</div>
<div class="t" style="left:416.7px;top:434.0px;color:#000;font-size:11px;letter-spacing:-0.425px;">Material Names</div>
<div class="t" style="left:501.0px;top:436.5px;color:#000;font-size:11px;letter-spacing:-0.309px;">Material Paths</div>
<div class="t" style="left:423.5px;top:466.0px;color:#000;font-size:11px;letter-spacing:-0.2px">belt_reflect</div>
<div class="t" style="left:1052.0px;top:468.0px;color:#000;font-size:11px;letter-spacing:-0.359px;">Delete</div>
<div class="t" style="left:423.5px;top:496.0px;color:#000;font-size:11px;letter-spacing:-0.2px">belt_diffuse</div>
<div class="t" style="left:1052.0px;top:498.0px;color:#000;font-size:11px;letter-spacing:-0.359px;">Delete</div>
<div class="t" style="left:423.5px;top:526.0px;color:#000;font-size:11px;letter-spacing:-0.2px">lower_reflect</div>
<div class="t" style="left:1052.0px;top:528.0px;color:#000;font-size:11px;letter-spacing:-0.359px;">Delete</div>
<div class="t" style="left:423.5px;top:555.0px;color:#000;font-size:11px;letter-spacing:-0.2px">boots_reflect</div>
<div class="t" style="left:1052.0px;top:557.0px;color:#000;font-size:11px;letter-spacing:-0.359px;">Delete</div>
<div class="t" style="left:423.5px;top:584.0px;color:#000;font-size:11px;letter-spacing:-0.2px">upper_reflect</div>
<div class="t" style="left:1052.0px;top:586.0px;color:#000;font-size:11px;letter-spacing:-0.359px;">Delete</div>
<div class="t" style="left:428.0px;top:621.0px;color:#000;font-size:11px;letter-spacing:-0.261px;background:#fff;padding:0 2px;margin-left:-2px">Type the materials filename (excluding extension)</div>
<div class="t" style="left:1065.0px;top:641.5px;color:#000;font-size:11px;letter-spacing:-0.297px;">Add Material</div>
<svg class="a" style="left:0;top:0" width="1366" height="768" viewBox="0 0 1366 768">
<path d="M608 150.1 C650 149.6 770 149.6 812 150.2 C822 150.6 824.4 154 824.4 160 L824.3 172 C824.3 178 822 180.6 812 181.2 C760 181.8 660 182.5 620 182.4 C596 182.2 584.6 180.5 584.4 172 L584.3 161 C584.3 153 592 150.4 608 150.1Z" fill="none" stroke="#ed1c24" stroke-width="4.7"/>
<path d="M834.6 168.2 L895.5 130.2 L895.5 148.4 L957.5 148.4 L957.5 187.7 L895.5 187.7 L895.5 205.8 Z" fill="none" stroke="#ed1c24" stroke-width="4.5" stroke-linejoin="miter" stroke-miterlimit="10"/>
</svg>
</body></html>
